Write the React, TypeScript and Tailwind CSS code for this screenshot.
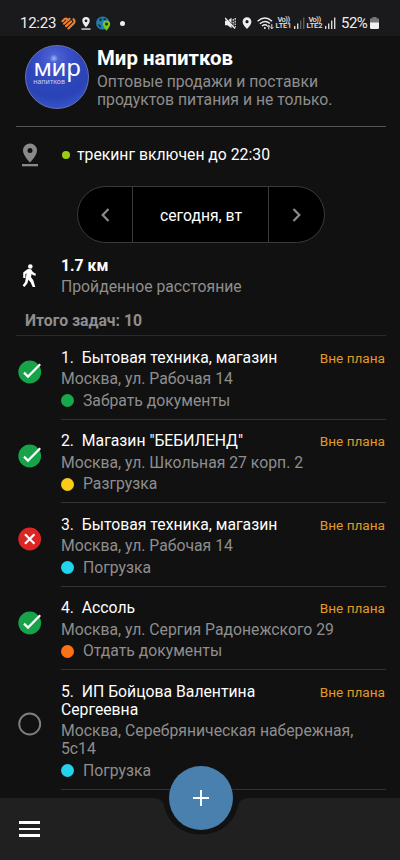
import { clsx } from 'clsx'

type Status = 'done' | 'failed' | 'open'

const tasks: { title: string; address: string; kind: string; color: string; status: Status }[] = [
  { title: 'Бытовая техника, магазин', address: 'Москва, ул. Рабочая 14', kind: 'Забрать документы', color: '#18a84c', status: 'done' },
  { title: 'Магазин "БЕБИЛЕНД"', address: 'Москва, ул. Школьная 27 корп. 2', kind: 'Разгрузка', color: '#facc15', status: 'done' },
  { title: 'Бытовая техника, магазин', address: 'Москва, ул. Рабочая 14', kind: 'Погрузка', color: '#22d3ee', status: 'failed' },
  { title: 'Ассоль', address: 'Москва, ул. Сергия Радонежского 29', kind: 'Отдать документы', color: '#f97316', status: 'done' },
  { title: 'ИП Бойцова Валентина Сергеевна', address: 'Москва, Серебряническая набережная, 5с14', kind: 'Погрузка', color: '#22d3ee', status: 'open' },
]

function Signal({ level }: { level: number }) {
  return (
    <svg width="11" height="12" viewBox="0 0 11 12" fill="#d8d8d8">
      <rect x="0" y="9" width="1.4" height="3" />
      <rect x="3" y="6.5" width="1.4" height="5.5" />
      <rect x="6" y="3.5" width="1.4" height="8.5" opacity={level > 2 ? 1 : 0.35} />
      <rect x="9" y="0.5" width="1.4" height="11.5" opacity={level > 3 ? 1 : 0.35} />
    </svg>
  )
}

function Volte({ sim }: { sim: string }) {
  return (
    <div className="flex w-[15px] flex-col items-center text-[7.5px] leading-[6.5px] font-medium text-[#e8e8e8]">
      <span className="tracking-[-0.5px]">Vo))</span>
      <span className="tracking-[-0.1px]">LTE{sim}</span>
    </div>
  )
}

function StatusBar() {
  return (
    <div className="flex h-9 items-center bg-[#1a191c] pt-[10px] pr-[21px] pl-[20px] text-[#ededed]">
      <span className="w-[36px] text-[15px] leading-4 tracking-[-0.25px] whitespace-nowrap">12:23</span>
      {/* striped heart */}
      <svg className="ml-[5px]" width="15" height="13" viewBox="0 0 15 13" fill="none" stroke="#f5822b" strokeWidth="2.1" strokeLinecap="round">
        <path d="M1.4 4.2 L3.8 1.9 Q5.1 1 6 2.2" />
        <path d="M3 6.7 L8.6 1.8" />
        <path d="M5 9.1 L10.2 4.4" />
        <path d="M7.4 11.4 L13 6 Q14.3 4 12.5 2.2" />
      </svg>
      <svg className="ml-[5px]" width="10" height="13" viewBox="0 0 10 13" fill="#ededed">
        <path fillRule="evenodd" d="M5 0a3.7 3.7 0 0 0-3.7 3.7C1.3 6.5 5 10.4 5 10.4s3.7-3.9 3.7-6.7A3.7 3.7 0 0 0 5 0Zm0 2.4a1.4 1.4 0 1 1 0 2.8 1.4 1.4 0 0 1 0-2.8Z" />
        <rect x="0.5" y="11.4" width="9" height="1.3" />
      </svg>
      {/* globe with green pin */}
      <svg className="ml-[5px]" width="15" height="15" viewBox="0 0 15 15">
        <circle cx="6.7" cy="7" r="6.6" fill="#2080ae" />
        <path d="M3 3.5l2-1.5 1 2-2 1.5zM7.5 2l3 .8-1 1.7-2-.8zM2 8l2.5 1 .5 3-2-1.5z" fill="#172b38" />
        <path d="M10.5 4.4A3.6 3.6 0 0 0 6.9 8c0 2.8 3.6 6.7 3.6 6.7s3.7-3.9 3.7-6.7a3.6 3.6 0 0 0-3.7-3.6Z" fill="#79c61c" />
        <circle cx="10.5" cy="8" r="1.5" fill="#1c3218" />
      </svg>
      <span className="ml-[9px] size-[5px] rounded-full bg-[#ededed]" />

      <div className="ml-auto flex items-center">
        <svg width="11" height="12" viewBox="0 0 11 12" fill="#ededed">
          <path d="M0 3.8h2.5L6.5.7v10.6L2.5 8.2H0z" />
          <path d="M8.2 2v8M10.2 1v10" stroke="#ededed" strokeWidth="1.2" strokeDasharray="1.7 1" />
          <path d="M1.5 1.2l9 9.6" stroke="#1a191c" strokeWidth="0.8" />
          <path d="M0 1l10 10.5" stroke="#ededed" strokeWidth="1.4" />
        </svg>
        <svg className="ml-[6px]" width="10" height="12" viewBox="0 0 10 12" fill="#ededed">
          <path fillRule="evenodd" d="M5 .3A4.4 4.4 0 0 0 .6 4.7C.6 8 5 11.8 5 11.8S9.4 8 9.4 4.7A4.4 4.4 0 0 0 5 .3Zm0 2.8a1.6 1.6 0 1 1 0 3.2 1.6 1.6 0 0 1 0-3.2Z" />
        </svg>
        <svg className="ml-[5px]" width="17" height="13" viewBox="0 0 17 13" fill="none" stroke="#ededed" strokeWidth="1.4">
          <path d="M.6 4.2Q8 -2.3 15 4.2" />
          <path d="M2.8 6.7Q8 2.2 12.9 6.5" />
          <path d="M5 9Q8 6.6 10.4 8.8" />
          <circle cx="7.8" cy="11" r="1" fill="#ededed" stroke="none" />
          <path d="M11.8 12.5v-4M10.3 10l1.5-1.7L13.2 10M14.8 7v4.5M13.5 10.2l1.4 1.6 1.4-1.6" strokeWidth="0.9" />
        </svg>
        <div className="ml-[2px]"><Volte sim="1" /></div>
        <div className="ml-[3px]"><Signal level={2} /></div>
        <div className="ml-[2px]"><Volte sim="2" /></div>
        <div className="ml-[3px]"><Signal level={4} /></div>
        <span className="ml-[5px] w-[28px] text-[15px] leading-4 tracking-[-0.5px] whitespace-nowrap">52%</span>
        <svg className="ml-px" width="9" height="12" viewBox="0 0 9 12">
          <path d="M2.5 0h4v1.2H8A1 1 0 0 1 9 2.2V6H0V2.2a1 1 0 0 1 1-1h1.5z" fill="#77767a" />
          <path d="M0 5.5h9v5.3a1.2 1.2 0 0 1-1.2 1.2H1.2A1.2 1.2 0 0 1 0 10.8z" fill="#f0f0f0" />
        </svg>
      </div>
    </div>
  )
}

function StatusIcon({ status }: { status: Status }) {
  return (
    <svg width="24" height="24" viewBox="0 0 24 24" fill="none">
      {status === 'done' && (
        <>
          <circle cx="11.7" cy="12" r="11.4" fill="#18a34a" />
          <path d="M6 12.6l4 4L22.2 4.2" stroke="#fff" strokeWidth="2.2" />
        </>
      )}
      {status === 'failed' && (
        <>
          <circle cx="11.7" cy="12" r="11.4" fill="#dc2626" />
          <path d="M7 7.3l9.4 9.4M16.4 7.3l-9.4 9.4" stroke="#fff" strokeWidth="2.2" />
        </>
      )}
      {status === 'open' && <circle cx="11.7" cy="12" r="10.5" stroke="#808080" strokeWidth="1.9" />}
    </svg>
  )
}

function Header() {
  return (
    <header className="mr-[14px] ml-4 flex h-[91px] border-b border-[#555] pt-[9px] pl-[9px]">
      <div
        className="flex size-16 shrink-0 flex-col items-center rounded-full border border-[#6d72b4] bg-[radial-gradient(circle_at_45%_20%,#a5b6f2_0%,#4c62d2_7%,#3a50c6_24%,#2d46ba_45%,#2a44b6_65%,#3457cc_85%,#24359a_100%)] font-['Noto_Sans'] text-white"
      >
        <span className="mt-[8px] text-[24px] leading-[26px] tracking-[-0.3px]">мир</span>
        <span className="mt-[-2px] mr-[16px] text-[7px] leading-[7px] text-[#c6cdf5]">напитков</span>
      </div>
      <div className="ml-2">
        <h1 className="mt-[2px] text-[20.4px] leading-[22px] font-bold text-white">Мир напитков</h1>
        <p className="mt-1 text-[15.75px] leading-[18px] text-[#8e8e8e]">
          Оптовые продажи и поставки
          <br />
          продуктов питания и не только.
        </p>
      </div>
    </header>
  )
}

function DaySwitcher() {
  return (
    <div className="mt-[3px] ml-[77px] flex h-[57px] w-[248px] rounded-full border border-[#3a3a3a] bg-black">
      <button className="flex w-[54px] items-center justify-center">
        <svg width="9" height="14" viewBox="0 0 9 14" fill="none" stroke="#8c8c8c" strokeWidth="2.2">
          <path d="M7.5 1L1.7 7l5.8 6" />
        </svg>
      </button>
      <div className="flex flex-1 items-center justify-center border-x border-[#3a3a3a] pt-0.5 pl-px text-[15.75px] text-white">сегодня, вт</div>
      <button className="flex w-[55px] items-center justify-center">
        <svg width="9" height="14" viewBox="0 0 9 14" fill="none" stroke="#8c8c8c" strokeWidth="2.2">
          <path d="M1.5 1l5.8 6-5.8 6" />
        </svg>
      </button>
    </div>
  )
}

function TaskList() {
  return (
    <ul>
      {tasks.map((task, idx) => (
        <li key={idx} className="flex">
          <div className="flex w-[61px] shrink-0 items-center pb-[11px] pl-[18px]">
            <StatusIcon status={task.status} />
          </div>
          <div className="mr-[14px] flex-1 border-b border-[#333] pt-[12.5px] pb-[9px] text-[15.75px] leading-[18px] text-[#8e8e8e]">
            <div className="flex justify-between text-white">
              <span className={clsx('whitespace-pre-wrap', task.status === 'open' && 'w-[215px]')}>
                {`${idx + 1}.  ${task.title}`}
              </span>
              <span className="mr-px text-[13.6px] whitespace-nowrap text-[#e09a25]">Вне плана</span>
            </div>
            <div className="mt-[3.5px]">{task.address}</div>
            <div className="mt-[3.5px] flex items-center">
              <span className="mr-[9px] size-[13px] rounded-full" style={{ backgroundColor: task.color }} />
              {task.kind}
            </div>
          </div>
        </li>
      ))}
    </ul>
  )
}

function BottomBar() {
  return (
    <nav className="relative mt-auto flex h-[62px] shrink-0 items-center bg-[#202020] pl-[19px]">
      <button className="flex w-[21px] flex-col gap-1">
        <span className="h-[2.5px] bg-white" />
        <span className="h-[2.5px] bg-white" />
        <span className="h-[2.5px] bg-white" />
      </button>
      {/* cutout behind the add button */}
      <svg className="absolute top-0 left-[154px]" width="94" height="39" viewBox="0 0 94 39" fill="#111">
        <path d="M0 0Q8 0 10 8C14 25 28 36.5 47 36.5S80 25 84 8Q86 0 94 0Z" />
      </svg>
      <button className="absolute top-[-32px] left-[169px] flex size-16 items-center justify-center rounded-full bg-[#4a80ae]">
        <svg width="16" height="16" viewBox="0 0 16 16" stroke="#fff" strokeWidth="2">
          <path d="M8 0v16M0 8h16" />
        </svg>
      </button>
    </nav>
  )
}

export default function App() {
  return (
    <div className="flex h-[860px] w-[400px] flex-col overflow-hidden bg-[#111] font-['Roboto',sans-serif]">
      <StatusBar />
      <Header />

      <div className="flex h-14 items-center">
        <svg className="ml-[22px]" width="16" height="24" viewBox="0 0 16 24" fill="#8a8a8a">
          <path fillRule="evenodd" d="M8 .5A7 7 0 0 0 1 7.5C1 12.7 8 19.5 8 19.5s7-6.8 7-12A7 7 0 0 0 8 .5Zm0 4.5a2.5 2.5 0 1 1 0 5 2.5 2.5 0 0 1 0-5Z" />
          <rect x="0" y="21" width="16" height="2.3" />
        </svg>
        <span className="ml-[23.5px] size-[8.5px] rounded-full bg-[#9acd0e]" />
        <span className="ml-[7px] text-[15.75px] text-white">трекинг включен до 22:30</span>
      </div>

      <DaySwitcher />

      <div className="mt-[13px] flex">
        <svg className="mt-[7.5px] ml-[22px]" width="15" height="24" viewBox="0 0 15 24" fill="#fff">
          <circle cx="8.3" cy="2.5" r="2.3" />
          <path d="M5.4 5.3Q7 4.6 8.9 5.3C10 6 10.300 8.5 13.7 9.600V11.8Q11 11.5 9.6 10L9 13.2 11.200 16 13.3 23H10.700L8.6 18.2 6.4 15.8 5.3 19.5 2.4 23 .6 21.5 3.1 18 4.6 9.3 3.4 10.200V14H1.2V8.6Z" />
        </svg>
        <div className="ml-6 text-[15.75px]">
          <div className="leading-5 font-bold text-white">1.7 км</div>
          <div className="leading-[22px] text-[#8e8e8e]">Пройденное расстояние</div>
        </div>
      </div>

      <div className="mt-3 mr-[14px] ml-4 h-[26px] border-b border-[#2b2b2b] pl-[9px] text-[15.75px] leading-[21px] font-bold text-[#8e8e8e]">
        Итого задач: 10
      </div>

      <TaskList />
      <BottomBar />
    </div>
  )
}
